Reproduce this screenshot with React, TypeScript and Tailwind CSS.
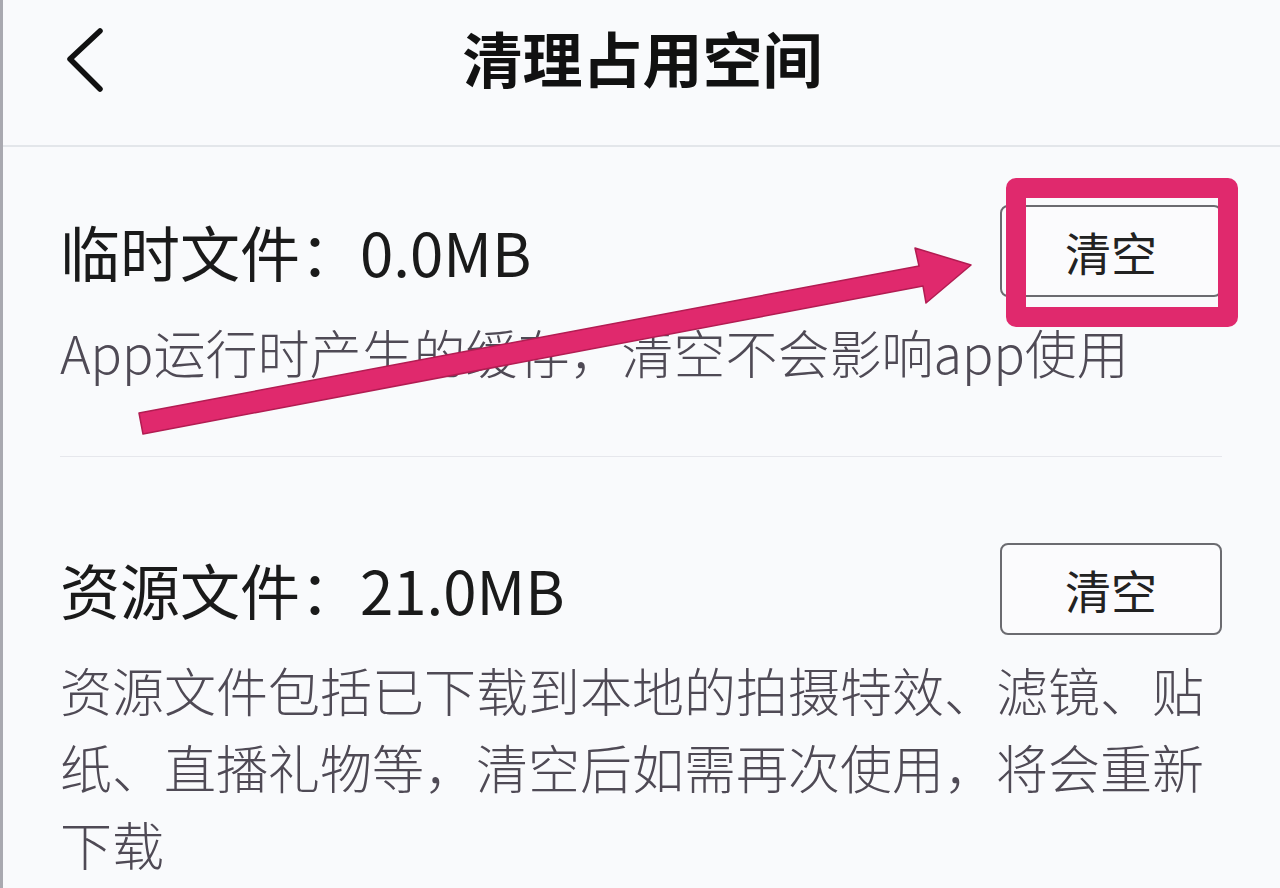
const SECTIONS = [
  {
    title: "临时文件：0.0MB",
    desc: "App运行时产生的缓存，清空不会影响app使用",
  },
  {
    title: "资源文件：21.0MB",
    desc: "资源文件包括已下载到本地的拍摄特效、滤镜、贴纸、直播礼物等，清空后如需再次使用，将会重新下载",
  },
];

const FONT = { fontFamily: '"Noto Sans CJK SC", "Noto Sans", sans-serif' };

function ClearButton() {
  return (
    <button className="w-[222px] h-[92px] shrink-0 border-2 border-[#6b6b70] rounded-[8px] bg-[#fbfbfd] text-[46px] leading-none text-[#222]">
      清空
    </button>
  );
}

export default function App() {
  return (
    <div
      className="relative w-[1280px] h-[888px] overflow-hidden bg-[#f9fafc] border-l-[3px] border-[#a9a9b0]"
      style={FONT}
    >
      {/* Header */}
      <div className="h-[147px] border-b-2 border-[#e3e6ea] flex items-start pt-[27px]">
        <div className="w-[120px] pl-[61px] pt-[1px]">
          <svg width="44" height="64" viewBox="0 0 44 64" fill="none">
            <path
              d="M36 3 L6 31 L36 61"
              stroke="#111"
              strokeWidth="5.5"
              strokeLinecap="round"
              strokeLinejoin="round"
            />
          </svg>
        </div>
        <div className="flex-1 text-center text-[60px] leading-none font-bold text-[#111] pr-[118px]">
          清理占用空间
        </div>
      </div>

      {/* Sections */}
      {SECTIONS.map((s, i) => (
        <div key={s.title} className="pl-[57px] pr-[58px]">
          <div
            className={i === 0 ? "pt-[58px] pb-[66px] border-b border-[#e6e7ec]" : "pt-[86px]"}
          >
            <div className="flex items-center justify-between">
              <div className="text-[60px] leading-none text-[#1a1a1a]">{s.title}</div>
              <ClearButton />
            </div>
            <div className="mt-[16px] text-[52px] leading-[77px] font-light text-[#4f4a55]">
              {s.desc}
            </div>
          </div>
        </div>
      ))}

      {/* Highlight box */}
      <div className="absolute left-[1003px] top-[178px] w-[232px] h-[149px] border-[20px] border-[#e0296d] rounded-[10px]" />

      {/* Arrow */}
      <svg className="absolute left-0 top-0" width="1280" height="888" viewBox="0 0 1280 888">
        <polygon
          points="136,413 140,434 920,286 923,303 968,265 912,248 916,266"
          fill="#e0296d"
          stroke="#b21c52"
          strokeWidth="1.5"
          strokeLinejoin="round"
        />
      </svg>
    </div>
  );
}
